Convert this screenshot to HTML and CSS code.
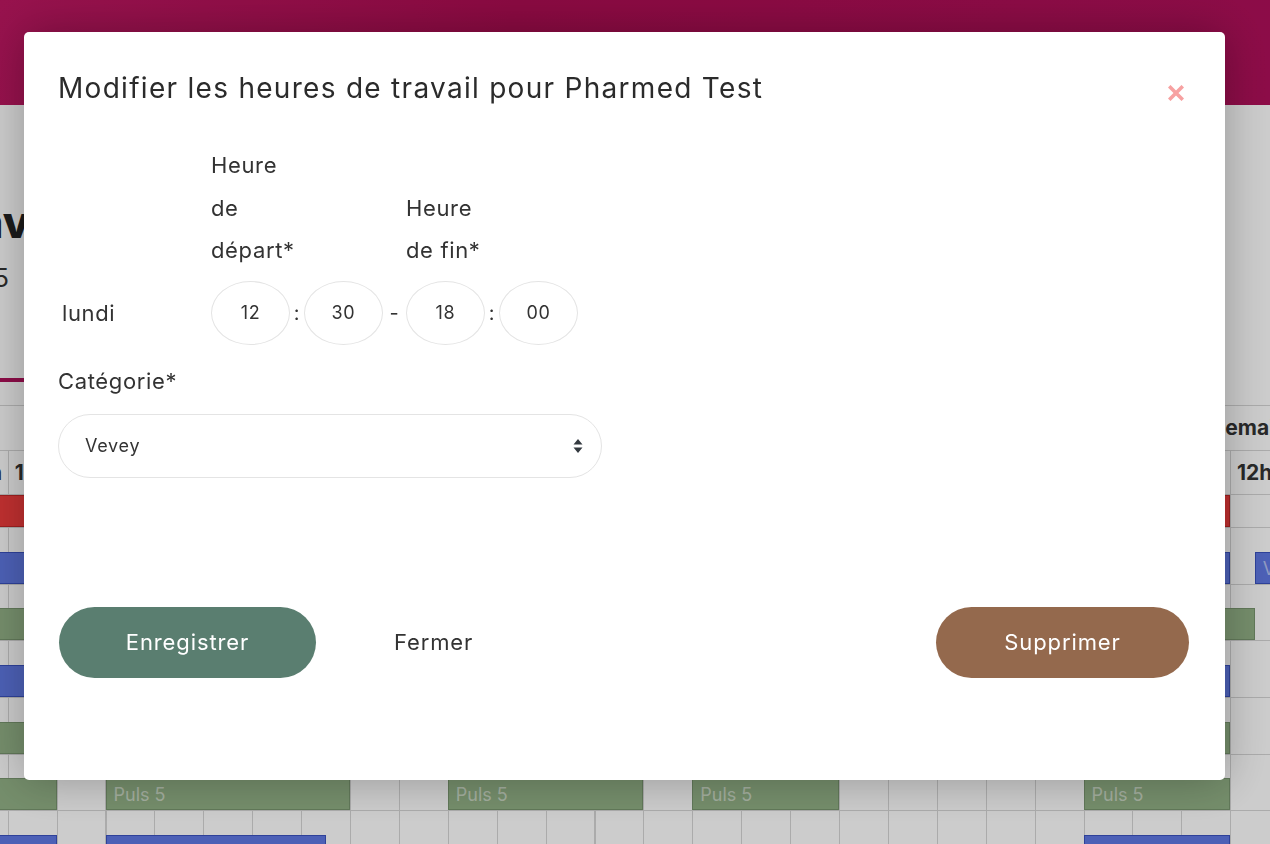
FILE: index.html
```html
<!DOCTYPE html>
<html lang="fr">
<head>
    <meta charset="UTF-8">
    <meta name="viewport" content="width=device-width, initial-scale=1.0">
    <title>Planning - Pharmed</title>
    <link rel="stylesheet" href="styles.css">
</head>
<body>
    <!-- Page behind the dialog -->
    <div class="page">
        <header class="topbar"></header>

        <section class="intro">
            <h1>Heures de travail</h1>
            <p>17.11.2025 - 23.11.2025</p>
            <div class="tabs"><span class="tab active">Vue semaine</span></div>
        </section>

        <!-- Week planning: one cell per hour, 8h to 20h for each day -->
        <div class="planning">
            <div class="timeline">
                <div class="days">
                    <div class="day-head">Semaine 47 - lundi</div>
                    <div class="day-head">Semaine 47 - mardi</div>
                    <div class="day-head">Semaine 47 - mercredi</div>
                </div>
                <div class="hours-scale">
                    <span>8h</span><span>9h</span><span>10h</span><span>11h</span><span>12h</span><span>13h</span><span>14h</span><span>15h</span><span>16h</span><span>17h</span><span>18h</span><span>19h</span>
                    <span>8h</span><span>9h</span><span>10h</span><span>11h</span><span>12h</span><span>13h</span><span>14h</span><span>15h</span><span>16h</span><span>17h</span><span>18h</span><span>19h</span>
                    <span>8h</span><span>9h</span><span>10h</span><span>11h</span><span>12h</span><span>13h</span><span>14h</span><span>15h</span><span>16h</span><span>17h</span><span>18h</span><span>19h</span>
                </div>

                <div class="lane">
                    <div class="event red" style="--d:0; --s:0; --len:4">Absent</div>
                    <div class="event red" style="--d:2; --s:0; --len:4">Absent</div>
                </div>
                <div class="lane">
                    <div class="event blue" style="--d:0; --s:0; --len:4">Vevey</div>
                    <div class="event blue" style="--d:2; --s:0; --len:4">Vevey</div>
                    <div class="event blue" style="--d:2; --s:4.5; --len:5.5">Vevey</div>
                </div>
                <div class="lane">
                    <div class="event green" style="--d:0; --s:0; --len:4">Puls 5</div>
                    <div class="event green" style="--d:2; --s:0; --len:4.5">Puls 5</div>
                </div>
                <div class="lane">
                    <div class="event blue" style="--d:0; --s:0; --len:4">Vevey</div>
                    <div class="event blue" style="--d:2; --s:0; --len:4">Vevey</div>
                </div>
                <div class="lane">
                    <div class="event green" style="--d:0; --s:0; --len:4">Puls 5</div>
                    <div class="event green" style="--d:2; --s:0; --len:4">Puls 5</div>
                </div>
                <div class="lane">
                    <div class="event green" style="--d:0; --s:0; --len:4">Puls 5</div>
                    <div class="event green" style="--d:0; --s:5; --len:5">Puls 5</div>
                    <div class="event green" style="--d:1; --s:0; --len:4">Puls 5</div>
                    <div class="event green" style="--d:1; --s:5; --len:3">Puls 5</div>
                    <div class="event green" style="--d:2; --s:1; --len:3">Puls 5</div>
                </div>
                <div class="lane">
                    <div class="event blue" style="--d:0; --s:0; --len:4">Vevey</div>
                    <div class="event blue" style="--d:0; --s:5; --len:4.5">Vevey</div>
                    <div class="event blue" style="--d:2; --s:1; --len:3">Vevey</div>
                </div>
            </div>
        </div>
    </div>

    <!-- Dimmed backdrop + dialog -->
    <div class="backdrop"></div>

    <div class="modal">
        <div class="modal-header">
            <h2>Modifier les heures de travail pour Pharmed Test</h2>
            <button class="close" type="button" aria-label="Fermer">
                <svg width="16" height="16" viewBox="0 0 16 16">
                    <path d="M2.5 2.5 L13.5 13.5 M13.5 2.5 L2.5 13.5" stroke="#f7a1a1" stroke-width="3.6" stroke-linecap="square"/>
                </svg>
            </button>
        </div>

        <div class="hours-head">
            <div class="col-start"><span class="col-title">Heure<br>de<br>départ*</span></div>
            <div class="col-end"><span class="col-title">Heure<br>de fin*</span></div>
        </div>

        <div class="hours-row">
            <label class="day">lundi</label>
            <input class="time" type="text" value="12">
            <span class="sep">:</span>
            <input class="time" type="text" value="30">
            <span class="sep dash">-</span>
            <input class="time" type="text" value="18">
            <span class="sep">:</span>
            <input class="time" type="text" value="00">
        </div>

        <label class="field-label">Catégorie*</label>
        <div class="select-wrap">
            <select class="select">
                <option>Vevey</option>
                <option>Puls 5</option>
            </select>
            <svg class="select-arrows" width="10" height="16" viewBox="0 0 10 16">
                <path d="M5 1 L9.5 6.5 H0.5 Z M5 15 L9.5 9.5 H0.5 Z" fill="#343a40"/>
            </svg>
        </div>

        <div class="actions">
            <button class="btn btn-save" type="button">Enregistrer</button>
            <button class="btn btn-link" type="button">Fermer</button>
            <button class="btn btn-delete" type="button">Supprimer</button>
        </div>
    </div>
</body>
</html>
```

FILE: styles.css
```css
/* General page */
body {
    margin: 0;
    font-family: Inter, "Open Sans", sans-serif;
    color: #333;
    background: #fff;
    overflow: hidden;
}

.page {
    height: 844px;
    overflow: hidden;
}

/* ---------- page behind the dialog ---------- */

.topbar {
    height: 105px;
    background: linear-gradient(100deg, #bd1761 0%, #ad0d52 40%, #b0105a 100%);
}

/* page is scrolled to the right: the text block ends near the left edge */
.intro {
    display: flex;
    flex-direction: column;
    box-sizing: border-box;
    height: 277px;
    width: 500px;
    margin-left: -420px;
    padding-top: 92px;
    text-align: right;
}

.intro h1 {
    margin: 0;
    font-size: 44px;
    font-weight: 800;
    color: #222;
    line-height: 50px;
}

.intro p {
    margin: 14px 71px 0 0;
    font-size: 25px;
    line-height: 34px;
    color: #333;
}

.tabs {
    margin-top: auto;
    text-align: left;
    padding-left: 330px;
}

.tab {
    display: inline-block;
    padding: 0 40px 14px 150px;
    font-size: 18px;
    color: #333;
    border-bottom: 4px solid #b0105a;
}

/* Week planning */
.planning {
    --cell: 48.9px;
    margin-top: 23px;
    border-top: 1px solid #d6d6d6;
    overflow: hidden;
}

.timeline {
    margin-left: -139px;
    width: calc(36 * var(--cell));
}

.days {
    display: flex;
    height: 44px;
    border-bottom: 1px solid #d6d6d6;
}

.day-head {
    width: calc(12 * var(--cell));
    flex: none;
    box-sizing: border-box;
    padding-left: 177px;
    font-weight: 700;
    font-size: 21px;
    line-height: 44px;
    white-space: nowrap;
    overflow: hidden;
}

.hours-scale {
    display: flex;
    height: 43px;
    border-bottom: 1px solid #d6d6d6;
}

.hours-scale span {
    width: var(--cell);
    flex: none;
    box-sizing: border-box;
    border-left: 1px solid #d6d6d6;
    padding-left: 6px;
    font-weight: 700;
    font-size: 21px;
    line-height: 43px;
    white-space: nowrap;
}

/* one resource per lane: event strip on top, empty strip under it */
.lane {
    position: relative;
    height: 56.7px;
    background:
        linear-gradient(#d6d6d6, #d6d6d6) 0 32px / 100% 1px no-repeat,
        repeating-linear-gradient(to right, #d6d6d6 0 1px, transparent 1px var(--cell));
}

.event {
    position: absolute;
    top: 0;
    height: 32px;
    left: calc((var(--d) * 12 + var(--s)) * var(--cell));
    width: calc(var(--len) * var(--cell));
    box-sizing: border-box;
    padding-left: 7px;
    font-size: 18px;
    line-height: 31px;
    color: rgba(255, 255, 255, 0.55);
    overflow: hidden;
    white-space: nowrap;
}

.event.red   { background: #f03c3c; border: 1px solid #c52828; }
.event.blue  { background: #6079e4; border: 1px solid #3a52c0; }
.event.green { background: #93b287; border: 1px solid #7a9770; }

/* ---------- dialog ---------- */

.backdrop {
    position: fixed;
    inset: 0;
    background: rgba(0, 0, 0, 0.2);
}

.modal {
    position: fixed;
    top: 32px;
    left: 24px;
    width: 1201px;
    height: 748px;
    box-sizing: border-box;
    padding: 39px 34px;
    background: #fff;
    border-radius: 5px;
    box-shadow: 0 0 45px rgba(0, 0, 0, 0.28);
    letter-spacing: 0.04em;
}

.modal-header {
    display: flex;
    justify-content: space-between;
    align-items: flex-start;
}

.modal-header h2 {
    margin: 0;
    font-size: 28px;
    font-weight: 400;
    line-height: 34px;
    letter-spacing: 0.046em;
    color: #2b2b2b;
}

.close {
    width: 30px;
    height: 30px;
    margin-top: 7px;
    padding: 0;
    border: 0;
    background: none;
    display: flex;
    align-items: center;
    justify-content: center;
}

/* Working hours */
.hours-head {
    display: flex;
    align-items: flex-end;
    margin-top: 36px;
    padding-left: 153px;
    font-size: 22px;
    line-height: 42.5px;
}

.col-start {
    width: 195px;
}

.hours-row {
    display: flex;
    align-items: center;
    margin-top: 9px;
}

.day {
    width: 149px;
    padding-left: 4px;
    font-size: 22px;
}

.time {
    width: 79px;
    height: 64px;
    box-sizing: border-box;
    border: 1px solid #e4e4e4;
    border-radius: 50%;
    text-align: center;
    font: inherit;
    font-size: 18px;
    letter-spacing: 0.04em;
    color: #333;
    padding: 0;
    outline: none;
}

.sep {
    width: 14px;
    text-align: center;
    font-size: 20px;
}

.sep.dash {
    width: 23px;
}

/* Category */
.field-label {
    display: block;
    margin-top: 21px;
    font-size: 22px;
    line-height: 30px;
}

.select-wrap {
    position: relative;
    width: 544px;
    margin-top: 18px;
}

.select {
    appearance: none;
    width: 100%;
    height: 64px;
    box-sizing: border-box;
    border: 1px solid #e4e4e4;
    border-radius: 32px;
    background: #fff;
    padding: 0 26px;
    font: inherit;
    font-size: 18px;
    letter-spacing: 0.04em;
    color: #333;
    outline: none;
}

.select-arrows {
    position: absolute;
    right: 19px;
    top: 24px;
}

/* Footer buttons */
.actions {
    display: flex;
    align-items: center;
    margin-top: 129px;
}

.btn {
    height: 71px;
    border: 0;
    border-radius: 36px;
    font: inherit;
    font-size: 22px;
    letter-spacing: 0.04em;
    background: none;
    color: #333;
}

.btn-save {
    width: 257px;
    margin-left: 1px;
    background: #5a7e70;
    color: #fff;
}

.btn-link {
    margin-left: 38px;
    padding: 0 40px;
}

.btn-delete {
    width: 253px;
    margin-left: auto;
    margin-right: 2px;
    background: #94694d;
    color: #fff;
}
```
